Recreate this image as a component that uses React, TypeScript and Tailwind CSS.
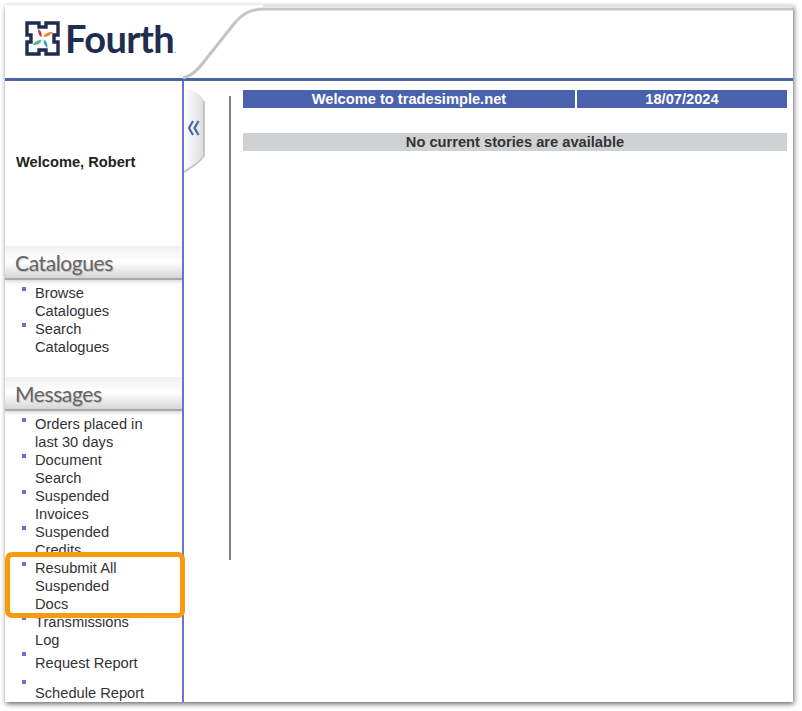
const sans = "font-['Liberation_Sans',Arial,sans-serif]";

const catalogues = [["Browse", "Catalogues"], ["Search", "Catalogues"]];
const messages = [
  ["Orders placed in", "last 30 days"],
  ["Document", "Search"],
  ["Suspended", "Invoices"],
  ["Suspended", "Credits"],
  ["Resubmit All", "Suspended", "Docs"],
  ["Transmissions", "Log"],
];

const Logo = () => (
  <div className="flex items-center gap-[5px]">
    <svg width="35" height="35" viewBox="0 0 35 35" fill="none">
      <path
        d="M2 2H14V6H21V2H33V14H29V21H33V33H21V29H14V33H2V21H6V14H2Z"
        stroke="#1f2d50"
        strokeWidth="3.400"
      />
      <path d="M13 8C16 10 17 12 16.500 16C14 15 13 12 13 8Z" fill="#c8353a" />
      <path d="M28 11C26 14 22 16 18.500 16C19 13 22 11 28 11Z" fill="#ee8a2c" />
      <path d="M8 24C9 21 13 19 16.500 19C16 22 13 24 8 24Z" fill="#5db27a" />
      <path d="M18.500 19C21 19 22.500 22 22.500 27C20 25 18.500 23 18.500 19Z" fill="#2f9fc0" />
    </svg>
    <span className="font-['Lato',sans-serif] text-[38px] leading-none tracking-[-0.6px] font-bold text-[#1f2d50]">
      Fourth<span className="text-[8px] text-[#7a8296]">.</span>
    </span>
  </div>
);

const SideHeading = ({ title }: { title: string }) => (
  <div className="h-[34px] flex items-center pl-[10px] pt-[2px] bg-gradient-to-b from-[#f1f1f1] via-white to-[#d6d6d6] border-b-2 border-[#a9a9a9] shadow-[0_2px_3px_rgba(0,0,0,0.15)] font-['Lato',sans-serif] text-[21px] tracking-[-0.4px] text-[#666666] [text-shadow:1px_1px_1px_rgba(0,0,0,0.2)]">
    {title}
  </div>
);

const MenuItem = ({ lines, className = "" }: { lines: string[]; className?: string }) => (
  <li className={`relative pl-[30px] text-[14.67px] leading-[18px] text-[#333333] ${className}`}>
    <span className="absolute left-[17px] top-[3px] w-[4px] h-[4px] bg-[#6a72c4]" />
    {lines.map((l) => (
      <div key={l}>{l}</div>
    ))}
  </li>
);

export default function App() {
  return (
    <div className={`w-[802px] h-[711px] bg-white pl-[5px] pt-[5px] overflow-hidden ${sans}`}>
      <div className="relative w-[788px] h-[697px] bg-white shadow-[1px_2px_5px_rgba(0,0,0,0.6)] flex flex-col overflow-hidden">
        <header className="relative h-[76px] shrink-0 border-b-[3px] border-[#4a62ad] pl-[20px] pt-[14px]">
          <Logo />
          <svg className="absolute left-0 top-0" width="788" height="74" fill="none">
            <path
              d="M178 73C186 71 192 66 198 58C208 45 218 33 228 20C236 10 244 4 260 4H788"
              stroke="#c4c4c4"
              strokeWidth="3"
            />
            <path d="M258 1.500H788" stroke="#e4e4e4" strokeWidth="3" />
          </svg>
        </header>

        <div className="flex flex-1 min-h-0">
          <aside className="w-[179px] shrink-0 border-r-[2px] border-[#7070d0] overflow-hidden">
            <div className="h-[165px] flex items-center pl-[11px] pb-[4px] text-[14.67px] font-bold text-[#222222]">
              Welcome, Robert
            </div>
            <SideHeading title="Catalogues" />
            <ul className="h-[97px] pt-[4px]">
              {catalogues.map((lines) => (
                <MenuItem key={lines[0]} lines={lines} />
              ))}
            </ul>
            <SideHeading title="Messages" />
            <ul className="pt-[4px]">
              {messages.map((lines) => (
                <MenuItem key={lines.join()} lines={lines} />
              ))}
              <MenuItem lines={["Request Report"]} className="pt-[5px] pb-[5px]" />
              <MenuItem lines={["Schedule Report"]} className="pt-[7px]" />
            </ul>
          </aside>

          <div className="relative w-[22px] shrink-0">
            <svg className="absolute left-0 top-[4px]" width="26" height="92" viewBox="0 0 26 92" fill="none">
              <defs>
                <linearGradient id="tab" x1="0" x2="1" y1="0" y2="0">
                  <stop offset="0" stopColor="#ffffff" />
                  <stop offset="1" stopColor="#dcdcdc" />
                </linearGradient>
              </defs>
              <path d="M0 2C10 6 18 10 20 16V70C18 76 8 82 0 87Z" fill="url(#tab)" />
              <path d="M20 16V70C18 76 8 82 0 87" stroke="#c4c4c4" strokeWidth="2" />
              <path
                d="M9 36L5 43L9 50M14.500 36L10.500 43L14.500 50"
                stroke="#4a62ad"
                strokeWidth="2.200"
              />
            </svg>
          </div>

          <main className="flex-1 flex pt-[9px]">
            <div className="ml-[23px] w-[2px] h-[464px] mt-[6px] bg-[#808080]" />
            <div className="ml-[12px] w-[544px]">
              <div className="flex gap-[2px] text-[14.67px] font-bold text-white leading-[18px]">
                <div className="w-[332px] bg-[#4a62ad] text-center">Welcome to tradesimple.net</div>
                <div className="w-[210px] bg-[#4a62ad] text-center">18/07/2024</div>
              </div>
              <div className="mt-[25px] bg-[#d0d1d3] text-center text-[14.67px] font-bold leading-[18px] text-[#333333]">
                No current stories are available
              </div>
            </div>
          </main>
        </div>

        <div className="absolute left-0 top-[547px] w-[180px] h-[66px] border-[5px] border-[#f79a0e] rounded-[7px]" />
      </div>
    </div>
  );
}
